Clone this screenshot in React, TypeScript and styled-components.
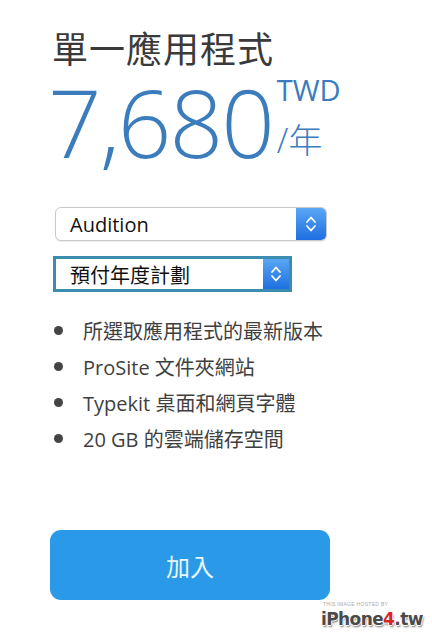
import React from 'react';
import styled, { createGlobalStyle } from 'styled-components';

const GlobalStyle = createGlobalStyle`
  html, body {
    margin: 0;
    padding: 0;
    background: #ffffff;
  }
  body {
    font-family: "Open Sans", "Noto Sans CJK TC", sans-serif;
  }
`;

const Page = styled.div`
  width: 432px;
  height: 636px;
  position: relative;
  overflow: hidden;
  background: #fff;
  padding: 24px 0 0 52px;
  box-sizing: border-box;
`;

const Title = styled.h1`
  margin: 0;
  font-size: 36px;
  line-height: 46px;
  font-weight: 400;
  color: #3a3a3a;
  font-family: "Noto Sans CJK TC", sans-serif;
  letter-spacing: 1px;
`;

const PriceRow = styled.div`
  display: flex;
  align-items: flex-start;
  margin-top: 4px;
  margin-left: -4px;
`;

const Amount = styled.div`
  font-size: 94px;
  line-height: 96px;
  font-weight: 300;
  color: #3b7cbd;
  letter-spacing: -2px;
`;

const Unit = styled.div`
  display: flex;
  flex-direction: column;
  margin-left: 4px;
  color: #3b7cbd;
`;

const Currency = styled.span`
  font-size: 29px;
  line-height: 32px;
  font-weight: 400;
`;

const Period = styled.span`
  font-size: 34px;
  line-height: 40px;
  margin-top: 14px;
  font-weight: 300;
`;

const Selects = styled.div`
  display: flex;
  flex-direction: column;
  gap: 15px;
  margin-top: 37px;
`;

const Select = styled.div<{ $width: number; $focused?: boolean }>`
  display: flex;
  align-items: stretch;
  width: ${p => p.$width}px;
  height: ${p => (p.$focused ? 30 : 32)}px;
  box-sizing: content-box;
  border: ${p => (p.$focused ? '3px solid #3b8db0' : '1px solid #c9c9c9')};
  border-radius: ${p => (p.$focused ? 0 : 6)}px;
  margin-left: ${p => (p.$focused ? 1 : 3)}px;
  background: #fff;
  overflow: hidden;
  box-shadow: ${p => (p.$focused ? 'none' : '0 1px 1px rgba(0,0,0,0.08)')};
`;

const SelectLabel = styled.span`
  flex: 1;
  display: flex;
  align-items: center;
  padding-left: 14px;
  font-size: 20px;
  color: #111;
`;

const Stepper = styled.span<{ $w: number }>`
  width: ${p => p.$w}px;
  display: flex;
  align-items: center;
  justify-content: center;
  background: linear-gradient(#5aa7f5, #1e6fe0);
`;

const Chevrons = () => (
  <svg width="12" height="20" viewBox="0 0 12 20" fill="none">
    <path d="M2 8 L6 3.5 L10 8" stroke="#fff" strokeWidth="1.8" strokeLinecap="round" strokeLinejoin="round" />
    <path d="M2 12 L6 16.5 L10 12" stroke="#fff" strokeWidth="1.8" strokeLinecap="round" strokeLinejoin="round" />
  </svg>
);

const Features = styled.ul`
  list-style: none;
  margin: 20px 0 0 0;
  padding: 0;
  display: flex;
  flex-direction: column;
`;

const Feature = styled.li`
  display: flex;
  align-items: center;
  height: 36px;
  font-size: 20px;
  color: #3f3f3f;

  &::before {
    content: '';
    width: 9px;
    height: 9px;
    border-radius: 50%;
    background: #444;
    margin: 0 20px 0 2px;
  }
`;

const JoinButton = styled.button`
  display: block;
  margin-top: 74px;
  margin-left: -2px;
  width: 280px;
  height: 70px;
  border: none;
  border-radius: 11px;
  background: #2a9ae8;
  color: #e8f6ff;
  font-size: 24px;
  font-family: "Noto Sans CJK TC", sans-serif;
  cursor: pointer;
`;

const Watermark = styled.div`
  position: absolute;
  left: 321px;
  top: 601px;
  display: flex;
  flex-direction: column;
  align-items: flex-start;
`;

const HostedBy = styled.span`
  font-size: 5px;
  line-height: 7px;
  letter-spacing: 0.3px;
  color: #aaa;
  font-family: "Liberation Sans", sans-serif;
  margin-left: 2px;
`;

const Logo = styled.span`
  font-family: "DejaVu Sans", sans-serif;
  font-weight: 700;
  font-size: 17px;
  line-height: 22px;
  color: #4a4a4a;
  letter-spacing: -0.6px;
  text-shadow: 1px 0 0 #fff, -1px 0 0 #fff, 0 1px 0 #fff, 0 -1px 0 #fff, 1px 2px 2px rgba(0,0,0,0.55);
`;

const Red = styled.span`
  color: #d8261c;
`;

const features = [
  '所選取應用程式的最新版本',
  'ProSite 文件夾網站',
  'Typekit 桌面和網頁字體',
  '20 GB 的雲端儲存空間',
];

const App: React.FC = () => {
  return (
    <>
      <GlobalStyle />
      <Page>
        <Title>單一應用程式</Title>
        <PriceRow>
          <Amount>7,680</Amount>
          <Unit>
            <Currency>TWD</Currency>
            <Period>/年</Period>
          </Unit>
        </PriceRow>
        <Selects>
          <Select $width={270}>
            <SelectLabel>Audition</SelectLabel>
            <Stepper $w={30}><Chevrons /></Stepper>
          </Select>
          <Select $width={233} $focused>
            <SelectLabel>預付年度計劃</SelectLabel>
            <Stepper $w={26}><Chevrons /></Stepper>
          </Select>
        </Selects>
        <Features>
          {features.map(f => (
            <Feature key={f}>{f}</Feature>
          ))}
        </Features>
        <JoinButton>加入</JoinButton>
        <Watermark>
          <HostedBy>THIS IMAGE HOSTED BY</HostedBy>
          <Logo>iPhone<Red>4</Red>.tw</Logo>
        </Watermark>
      </Page>
    </>
  );
};

export default App;
